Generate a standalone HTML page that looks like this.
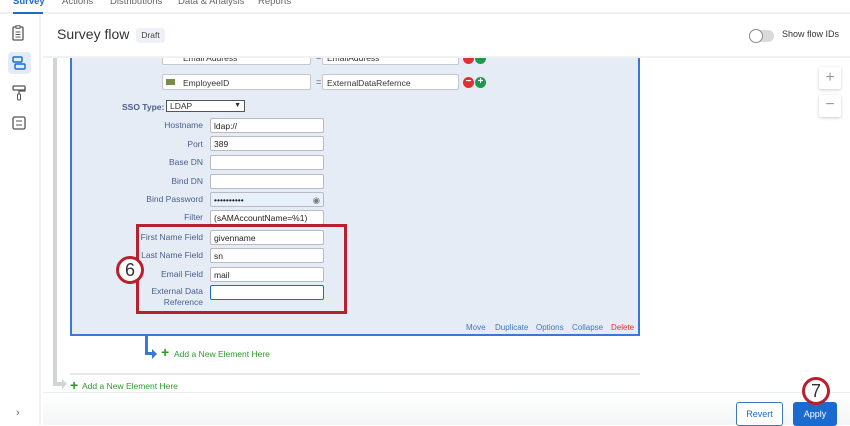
<!DOCTYPE html><html><head><style>
*{box-sizing:border-box;margin:0;padding:0}
body{width:850px;height:425px;overflow:hidden;background:#fff;font-family:"Liberation Sans",sans-serif;position:relative;font-size:9px;color:#333}
.a{position:absolute}
.lbl{position:absolute;right:647px;color:#4a5f8a;font-size:8.5px;text-align:right}
.in{position:absolute;left:210px;width:114px;height:15px;background:#fff;border:1px solid #b8bcc2;border-radius:2px;font-size:8.5px;padding:2px 3px;color:#222}
.link{position:absolute;top:323px;font-size:8px;color:#3a78c3}
.circ{position:absolute;width:28px;height:28px;border:3px solid #b8202e;border-radius:50%;background:#fff;font-size:18px;text-align:center;line-height:22px;color:#333}
.pm{position:absolute;width:11px;height:11px;border-radius:50%;color:#fff;font-size:10px;line-height:10px;text-align:center;font-weight:bold}
</style></head><body>
<div class="a" style="left:0;top:0;width:850px;height:14px;border-bottom:2px solid #eef0f2"></div>
<div class="a" style="left:13px;top:-4px;font-size:9.5px;color:#1a6ad0;font-weight:bold">Survey</div>
<div class="a" style="left:13px;top:12px;width:30px;height:2px;background:#1a6ad0"></div>
<div class="a" style="left:62px;top:-4px;font-size:9.5px;color:#666">Actions</div>
<div class="a" style="left:110px;top:-4px;font-size:9.5px;color:#666">Distributions</div>
<div class="a" style="left:178px;top:-4px;font-size:9.5px;color:#666">Data &amp; Analysis</div>
<div class="a" style="left:258px;top:-4px;font-size:9.5px;color:#666">Reports</div>
<div class="a" style="left:0;top:15px;width:41px;height:410px;border-right:2px solid #eef0f2;background:#fff"></div>
<svg class="a" style="left:11px;top:25px" width="14" height="16" viewBox="0 0 14 16"><rect x="2" y="2" width="10" height="13" rx="1" fill="none" stroke="#555" stroke-width="1.3"/><rect x="5" y="0.8" width="4" height="2.5" fill="#fff" stroke="#555" stroke-width="1"/><path d="M4.5 7h5M4.5 9.5h5M4.5 12h5" stroke="#555"/></svg>
<div class="a" style="left:8px;top:52px;width:23px;height:22px;background:#e3ebf7;border-radius:4px"></div>
<svg class="a" style="left:12px;top:56px" width="14" height="14" viewBox="0 0 14 14"><rect x="1" y="1" width="9" height="5" rx="1" fill="none" stroke="#1a6ad0" stroke-width="1.4"/><rect x="3" y="8" width="10" height="5" rx="1" fill="none" stroke="#1a6ad0" stroke-width="1.4"/></svg>
<svg class="a" style="left:12px;top:85px" width="14" height="16" viewBox="0 0 14 16"><rect x="1" y="1" width="12" height="4" rx="1" fill="none" stroke="#555" stroke-width="1.3"/><path d="M13 3v3H7v3" fill="none" stroke="#555" stroke-width="1.2"/><rect x="5.5" y="9" width="3" height="6" rx="1" fill="none" stroke="#555"/></svg>
<svg class="a" style="left:12px;top:116px" width="14" height="14" viewBox="0 0 14 14"><rect x="1" y="1" width="12" height="12" rx="1.5" fill="none" stroke="#555" stroke-width="1.3"/><path d="M4 5h6M4 9h6" stroke="#555"/></svg>
<div class="a" style="left:16px;top:407px;font-size:11px;color:#666">›</div>
<div class="a" style="left:43px;top:15px;width:807px;height:43px;background:#fff;border-bottom:2px solid #f0f1f3;z-index:3"></div>
<div class="a" style="left:57px;top:26px;font-size:14px;color:#333;z-index:4">Survey flow</div>
<div class="a" style="left:136px;top:28px;width:29px;height:15px;background:#eef2f7;border-radius:3px;font-size:8.5px;color:#444;text-align:center;line-height:15px;z-index:4">Draft</div>
<div class="a" style="left:749px;top:30px;width:25px;height:12px;border-radius:6px;background:#d8dadd;z-index:4"></div>
<div class="a" style="left:749px;top:29px;width:14px;height:14px;border-radius:7px;background:#fff;border:1px solid #888;z-index:4"></div>
<div class="a" style="left:782px;top:29px;font-size:9px;color:#333;z-index:4">Show flow IDs</div>
<div class="a" style="left:819px;top:67px;width:22px;height:22px;background:#fff;box-shadow:0 1px 3px rgba(0,0,0,.2);border-radius:2px;text-align:center;font-size:16px;color:#999;line-height:21px">+</div>
<div class="a" style="left:819px;top:95px;width:22px;height:22px;background:#fff;box-shadow:0 1px 3px rgba(0,0,0,.2);border-radius:2px;text-align:center;font-size:16px;color:#999;line-height:20px">−</div>
<div class="a" style="left:53px;top:57px;width:4px;height:328px;background:#d3d4d6"></div>
<div class="a" style="left:53px;top:382px;width:10px;height:4px;background:#d3d4d6"></div>
<div class="a" style="left:62px;top:379px;border-left:5px solid #d3d4d6;border-top:5px solid transparent;border-bottom:5px solid transparent"></div>
<div class="a" style="left:70px;top:373px;width:570px;height:2px;background:#e6e7e9"></div>
<div class="a" style="left:70px;top:377px;font-size:14px;color:#2a9a2a;font-weight:bold">+</div>
<div class="a" style="left:82px;top:381px;font-size:8.5px;color:#2a9a2a">Add a New Element Here</div>
<div class="a" style="left:70px;top:50px;width:570px;height:286px;background:#e6ecf6;border:2px solid #3a78d8;border-top:none"></div>
<div class="a" style="left:162px;top:50px;width:149px;height:15px;background:#fff;border:1px solid #c4c7cc;border-radius:2px;padding:2px 3px 0 20px;font-size:8.5px">Email Address</div>
<div class="a" style="left:316px;top:52px;color:#4a5f8a">=</div>
<div class="a" style="left:322px;top:50px;width:137px;height:15px;background:#fff;border:1px solid #c4c7cc;border-radius:2px;padding:2px 4px;font-size:8.5px">EmailAddress</div>
<div class="pm" style="left:463px;top:53px;background:#d33"></div>
<div class="pm" style="left:475px;top:53px;background:#1a9a4a"></div>
<div class="a" style="left:162px;top:74px;width:149px;height:16px;background:#fff;border:1px solid #c4c7cc;border-radius:2px;padding:3px 3px 0 20px;font-size:8.5px">EmployeeID</div>
<div class="a" style="left:166px;top:79px;width:9px;height:6px;background:#7a8a4a"></div>
<div class="a" style="left:316px;top:77px;color:#4a5f8a">=</div>
<div class="a" style="left:322px;top:74px;width:137px;height:16px;background:#fff;border:1px solid #c4c7cc;border-radius:2px;padding:3px 4px;font-size:8.5px">ExternalDataRefernce</div>
<div class="pm" style="left:463px;top:77px;background:#d33">−</div>
<div class="pm" style="left:475px;top:77px;background:#1a9a4a">+</div>
<div class="a" style="left:122px;top:102px;font-size:8.5px;color:#4a5f8a;font-weight:bold">SSO Type:</div>
<div class="a" style="left:166px;top:100px;width:79px;height:12px;background:#fff;border:1px solid #555;font-size:8.5px;padding:0 3px;line-height:10px">LDAP<span style="float:right;font-size:7px">▼</span></div>
<div class="lbl" style="top:120px">Hostname</div><div class="in" style="top:118px">ldap://</div>
<div class="lbl" style="top:139px">Port</div><div class="in" style="top:136px">389</div>
<div class="lbl" style="top:157px">Base DN</div><div class="in" style="top:155px"></div>
<div class="lbl" style="top:176px">Bind DN</div><div class="in" style="top:174px"></div>
<div class="lbl" style="top:194px">Bind Password</div><div class="in" style="top:192px;background:#e8f0fc">••••••••••<span style="float:right;color:#777">◉</span></div>
<div class="lbl" style="top:212px">Filter</div><div class="in" style="top:210px">(sAMAccountName=%1)</div>
<div class="lbl" style="top:232px">First Name Field</div><div class="in" style="top:230px">givenname</div>
<div class="lbl" style="top:250px">Last Name Field</div><div class="in" style="top:248px">sn</div>
<div class="lbl" style="top:269px">Email Field</div><div class="in" style="top:267px">mail</div>
<div class="lbl" style="top:286px;line-height:11px">External Data<br>Reference</div><div class="in" style="top:285px;border:1.5px solid #1a6ad0"></div>
<div class="a" style="left:136px;top:224px;width:211px;height:90px;border:3px solid #b8202e"></div>
<div class="circ" style="left:116px;top:256px">6</div>
<div class="link" style="left:466px">Move</div>
<div class="link" style="left:495px">Duplicate</div>
<div class="link" style="left:536px">Options</div>
<div class="link" style="left:572px">Collapse</div>
<div class="link" style="left:611px;color:#d33">Delete</div>
<div class="a" style="left:145px;top:336px;width:3px;height:19px;background:#3a78d8"></div>
<div class="a" style="left:145px;top:352px;width:8px;height:3px;background:#3a78d8"></div>
<div class="a" style="left:152px;top:349px;border-left:5px solid #3a78d8;border-top:5px solid transparent;border-bottom:5px solid transparent"></div>
<div class="a" style="left:161px;top:344px;font-size:14px;color:#2a9a2a;font-weight:bold">+</div>
<div class="a" style="left:174px;top:349px;font-size:8.5px;color:#2a9a2a">Add a New Element Here</div>
<div class="a" style="left:43px;top:392px;width:807px;height:33px;border-top:1px solid #eceef0;background:linear-gradient(#fff,#f4f5f6)"></div>
<div class="a" style="left:736px;top:402px;width:47px;height:24px;border:1px solid #3a78c3;border-radius:3px;background:#fff;color:#1a6ad0;font-size:9px;text-align:center;line-height:22px">Revert</div>
<div class="a" style="left:793px;top:402px;width:44px;height:24px;background:#1a6ad0;border-radius:3px;color:#fff;font-size:9px;text-align:center;line-height:24px">Apply</div>
<div class="circ" style="left:802px;top:377px;z-index:5">7</div>
</body></html>
